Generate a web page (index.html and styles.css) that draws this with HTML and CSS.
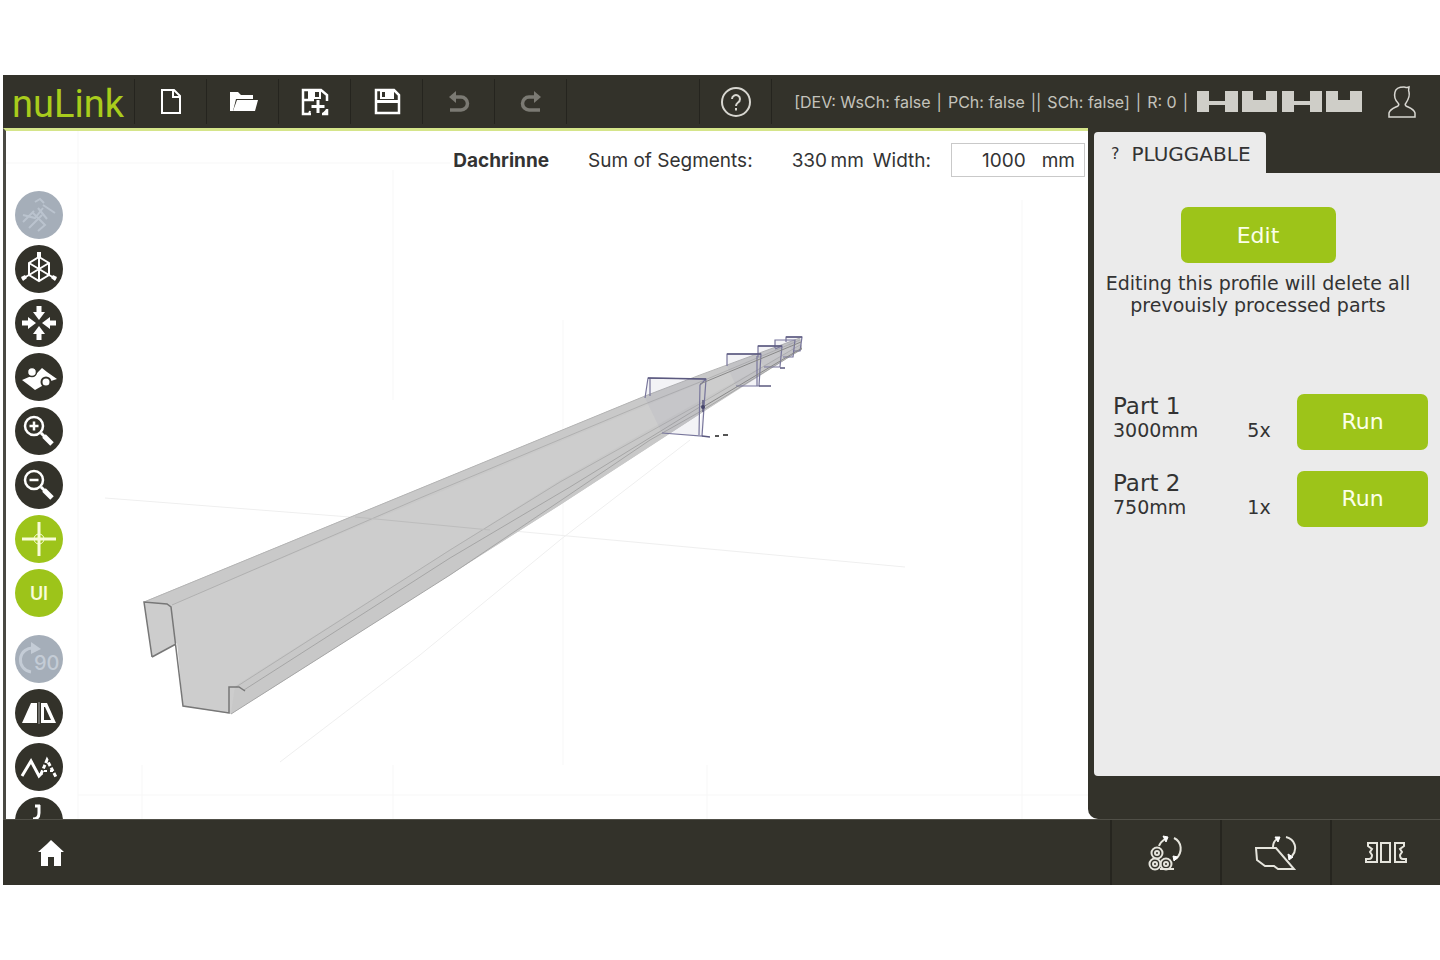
FILE: index.html
```html
<!DOCTYPE html>
<html lang="en">
<head>
<meta charset="utf-8">
<title>nuLink</title>
<link rel="stylesheet" href="styles.css">
</head>
<body>
<div class="app">
  <header class="topbar">
    <a class="logo" href="#">nuLink</a>
    <button class="bar-btn" aria-label="New"><svg width="24" height="28" viewBox="0 0 24 28"><path d="M3 2h12l6 6v17H3z" fill="none" stroke="#fff" stroke-width="2"/><path d="M14 2v7h7" fill="none" stroke="#fff" stroke-width="2"/></svg></button>
    <button class="bar-btn" aria-label="Open"><svg width="30" height="28" viewBox="0 0 30 28"><path d="M2 23V4h8l3 3h12v4H8L5 23z" fill="#fff"/><path d="M9 12h21l-3 11H5z" fill="#fff"/></svg></button>
    <button class="bar-btn" aria-label="Save as"><svg width="30" height="28" viewBox="0 0 30 28"><path d="M11 26H3V2h18l6 5v6M3 12h11M27 21v5h-5" fill="none" stroke="#fff" stroke-width="2.500"/><path d="M8 2h13v9H8z" fill="#fff"/><path d="M15 4h4v5h-4z" fill="#33322a"/><path d="M18 12v13M11.500 18.500h13" stroke="#33322a" stroke-width="6"/><path d="M18 12v13M11.500 18.500h13" stroke="#fff" stroke-width="3"/><path d="M10 23l-1 3M23 26l4-4" stroke="#fff" stroke-width="2"/></svg></button>
    <button class="bar-btn" aria-label="Save"><svg width="28" height="28" viewBox="0 0 28 28"><path d="M3 2h18l5 5v18H3z" fill="none" stroke="#fff" stroke-width="2.500"/><path d="M7 2h14v9H7zM3 12h23v3H3z" fill="#fff"/><path d="M9 4h3v5H9z" fill="#33322a"/></svg></button>
    <button class="bar-btn" aria-label="Undo" disabled><svg width="24" height="24" viewBox="0 0 24 24"><path d="M5 7h9a6 6 0 0 1 0 13H3" fill="none" stroke="#7b7a73" stroke-width="3.500"/><path d="M2 7l7-6v12z" fill="#7b7a73"/></svg></button>
    <button class="bar-btn" aria-label="Redo" disabled><svg width="24" height="24" viewBox="0 0 24 24"><path d="M19 7h-9a6 6 0 0 0 0 13h11" fill="none" stroke="#7b7a73" stroke-width="3.500"/><path d="M22 7l-7-6v12z" fill="#7b7a73"/></svg></button>
    <span class="spacer"></span>
    <button class="bar-btn help" aria-label="Help"><svg width="32" height="32" viewBox="0 0 32 32"><circle cx="16" cy="16" r="14" fill="none" stroke="#d8d7d1" stroke-width="2"/><path d="M12 13a4 4 0 1 1 6 3.500c-1.500 1-2 1.500-2 3.500M16 22v2.500" fill="none" stroke="#d8d7d1" stroke-width="2"/></svg></button>
    <div class="status">
      <div class="status-text"><span>[DEV: WsCh: false</span><span>|</span><span>PCh: false</span><span>||</span><span>SCh: false]</span><span>|</span><span>R: 0</span><span>|</span></div>
      <svg class="profiles" width="166" height="21" viewBox="0 0 166 21" fill="#cfcec8"><path d="M0 0h12v21H0zM28 0h13v21H28zM12 10h16v4H12z"/><path d="M45 0h11v21H45zM69 0h11v21H69zM56 9h13v12H56z"/><path d="M85 0h12v21H85zM113 0h12v21h-12zM97 10h16v4H97z"/><path d="M129 0h12v21h-12zM153 0h12v21h-12zM141 9h12v12h-12z"/></svg>
      <button class="user" aria-label="Account"><svg width="30" height="34" viewBox="0 0 30 34"><path d="M2 32v-4c1-4 5-5 9-7 1-1 1-2 0-3-3-3-4-7-3-11 1-5 6-5 9-5 1 0 3 1 5 0 0 2-1 3 0 5 1 4-1 8-3 11-1 1-1 2 0 3 4 2 8 3 9 7v4z" fill="none" stroke="#d8d7d1" stroke-width="1.500"/></svg></button>
    </div>
  </header>

  <main class="workspace">
    <section class="viewport">
      <svg class="scene" viewBox="6 131 1082 688" preserveAspectRatio="xMinYMin slice" aria-hidden="true">
        <g fill="none" stroke="#f7f7f7"><path d="M78 131V819M6 163H450M78 795H1088M142 765V819M393 765V819M707 765V819M563 320V765M393 170V400M1022 200V819"/></g>
        <g fill="none" stroke="#efefef"><path d="M105 498L350 517M470 527L905 567M280 762L420 655 560 540 690 440"/></g>
        <path d="M144 602L148 600 645 396 800 338 802 347 703 412 560 505 231 714 183 706 177 643 152 657z" fill="#cdcdcd"/>
        <path d="M144 602L645 396 800 338 801 341 700 383 171 605z" fill="#c9c9c9"/>
        <path d="M235 686L560 480 703 399 802 345 802 349 703 412 560 505 231 714z" fill="#c8c8c8"/>
        <path d="M144 602L645 396 700 375 800 338" fill="none" stroke="#b4b4b4"/>
        <path d="M172 605L420 498 645 404 700 382 800 340M236 687L450 550 560 482 703 402 800 345" fill="none" stroke="#b0b0b0"/>
        <path d="M244 690L450 558 570 487 703 405M231 714L450 575 563 499 650 440 703 410 802 349" fill="none" stroke="#a6a6a6"/>
        <path d="M355 517L490 530" stroke="#bdbdbd"/>
        <path d="M152 657L144 602 167 604 171 607 183 706 229 713 229 687 239 687 245 691M152 657L176 644" fill="none" stroke="#777" stroke-width="1.500"/>
        <g fill="#8885aa" fill-opacity=".1" stroke="#77759b" stroke-width="1.200">
          <path d="M645 398L648 378 706 379 702 436 662 433M650 378V396M706 379L700 385 699 435"/>
          <path d="M727 366V354H761L759 386H736M757 356V386"/>
          <path d="M758 357V346H782L780 367H764M775 349l7-3"/>
          <path d="M775 348V340H795L793 357H783"/>
          <path d="M786 342V337H802L800 351H793"/>
        </g>
        <path d="M648 378L706 379M703 400v12M727 354h34M758 346h24M786 337h16M702 436l8 1M759 386h12M780 368h5" stroke="#5b597f" stroke-width="1.500"/>
        <path d="M700 384L801 342M703 407L802 348" stroke="#888" stroke-width="1"/>
        <circle cx="703" cy="407" r="2" fill="#45446a"/>
        <path d="M715 436h4M723 435h5" stroke="#555" stroke-width="2"/>
      </svg>

      <nav class="tools" aria-label="View tools">
        <button class="tool muted" aria-label="Measure" disabled><svg viewBox="0 0 48 48"><path d="M8 31l11-11M14 37l13-13M28 14l12 8M17 21l13 13-7 6M23 17l9 11M20 11l5-3 4 4M8 24l12 3 8-10" fill="none" stroke="#bac3ce" stroke-width="2"/></svg></button>
        <button class="tool" aria-label="Axes"><svg viewBox="0 0 48 48"><g fill="none" stroke="#fff" stroke-width="2"><path d="M24 12l10 6v12l-10 6-10-6V18z"/><path d="M24 7v29M14 18l20 12M34 18L14 30M14 30l-7 4M34 30l7 4"/></g><path d="M22 7h4v6h-4zM6 32l4-2 2 3-4 3zM42 32l-4-2-2 3 4 3z" fill="#fff"/></svg></button>
        <button class="tool" aria-label="Fit view"><svg viewBox="0 0 48 48" fill="#fff"><path id="arr" d="M21.500 7h5v6h3.500l-6 8-6-8h3.500z"/><use href="#arr" transform="rotate(90 24 24)"/><use href="#arr" transform="rotate(180 24 24)"/><use href="#arr" transform="rotate(270 24 24)"/></svg></button>
        <button class="tool" aria-label="Plane"><svg viewBox="0 0 48 48"><path d="M7 27l14-6 6-6 5 4 10 7-9 3-6 4-7 4-5-4z" fill="#fff"/><circle cx="17" cy="19" r="4.500" fill="#fff" stroke="#33322a" stroke-width="1.500"/><circle cx="31" cy="29" r="4.500" fill="#fff" stroke="#33322a" stroke-width="2"/></svg></button>
        <button class="tool" aria-label="Zoom in"><svg viewBox="0 0 48 48" fill="none" stroke="#fff"><circle cx="19" cy="19" r="9" stroke-width="2.500"/><path d="M14.500 19h9M19 14.500v9" stroke-width="2.500"/><path d="M26 26l4 4" stroke-width="3"/><path d="M29 29l8 8" stroke-width="5"/></svg></button>
        <button class="tool" aria-label="Zoom out"><svg viewBox="0 0 48 48" fill="none" stroke="#fff"><circle cx="19" cy="19" r="9" stroke-width="2.500"/><path d="M14.500 19h9" stroke-width="2.500"/><path d="M26 26l4 4" stroke-width="3"/><path d="M29 29l8 8" stroke-width="5"/></svg></button>
        <button class="tool active" aria-label="Crosshair"><svg viewBox="0 0 48 48" fill="none" stroke="#f8fcd8"><path d="M24 7v34M7 24h34" stroke-width="3"/><circle cx="24" cy="24" r="5" stroke-width="1"/></svg></button>
        <button class="tool active">UI</button>
        <button class="tool muted after-gap" aria-label="Rotate 90 degrees" disabled><svg viewBox="0 0 48 48"><path d="M19 13A12 12 0 1 0 16 37" fill="none" stroke="#c4ccd6" stroke-width="3"/><path d="M16 7l10 7-10 5z" fill="#c4ccd6"/><text class="deg" x="19" y="35">90</text></svg></button>
        <button class="tool" aria-label="Mirror"><svg viewBox="0 0 48 48"><path d="M7 34l9-20h6v20zM26 14h6l9 20H26z" fill="#fff"/><path d="M29 18h1l6 13h-7z" fill="#33322a"/><path d="M24 13v22" stroke="#aaa" stroke-width="1"/></svg></button>
        <button class="tool" aria-label="Bends"><svg viewBox="0 0 48 48" fill="none" stroke="#fff" stroke-width="3"><path d="M7 33l9-15 8 15 3-3"/><path d="M26 31l6-14 9 17" stroke-dasharray="4 2"/><path d="M29 28h9" stroke-width="2" stroke-dasharray="3 3"/></svg></button>
        <button class="tool" aria-label="Hook"><svg viewBox="0 0 48 48" fill="none" stroke="#fff" stroke-width="3"><path d="M24 8v8c0 4-2 6-6 6M20 9h5"/></svg></button>
      </nav>

      <form class="profile-info">
        <strong class="profile-name">Dachrinne</strong>
        <span class="sum-label">Sum of Segments:</span>
        <span class="sum-value">330&#8201;mm</span>
        <label class="width-label" for="width">Width:</label>
        <span class="field"><input id="width" type="text" value="1000"><span>mm</span></span>
      </form>
    </section>

    <aside class="panel">
      <button class="tab"><span class="tab-mark">?</span>PLUGGABLE</button>
      <div class="panel-body">
        <div class="intro">
          <button class="btn edit">Edit</button>
          <p class="note">Editing this profile will delete all prevouisly processed parts</p>
        </div>
        <ul class="parts">
          <li class="part"><div><div class="part-name">Part 1</div><div>3000mm</div></div><span class="count">5x</span><button class="btn">Run</button></li>
          <li class="part"><div><div class="part-name">Part 2</div><div>750mm</div></div><span class="count">1x</span><button class="btn">Run</button></li>
        </ul>
      </div>
    </aside>
  </main>

  <footer class="bottombar">
    <a class="home" href="#" aria-label="Home"><svg width="28" height="28" viewBox="0 0 28 28"><path d="M14 1l13 12h-3v14h-7v-9h-6v9H4V13H1L10 5z" fill="#fff"/></svg></a>
    <button class="foot-btn" aria-label="Coils"><svg width="36" height="36" viewBox="0 0 36 36" fill="none" stroke="#e6e5dd" stroke-width="2"><circle cx="9" cy="18" r="5.500"/><circle cx="9" cy="18" r="2"/><circle cx="7" cy="29" r="5.500"/><circle cx="7" cy="29" r="2"/><circle cx="18" cy="29" r="5.500"/><circle cx="18" cy="29" r="2"/><path d="M12 34h14M11 11c1-3 3-5 6-7M26 3c8 4 9 14 2 21" stroke-width="2"/><path d="M15 1l5 1-2 5zM25 21l5 1-4 4z" fill="#fff" stroke="#fff" stroke-width="1"/></svg></button>
    <button class="foot-btn" aria-label="Rotate profile"><svg width="42" height="36" viewBox="0 0 42 36" fill="none" stroke="#e6e5dd" stroke-width="2"><path d="M1 13h20l18 21H23l-4-3h-9L2 25z"/><path d="M18 12c0-4 1-6 4-8M31 2c9 2 12 12 6 19"/><path d="M20 2l5 0-2 5zM33 19l5 3-4 3z" fill="#fff" stroke="#fff" stroke-width="1"/></svg></button>
    <button class="foot-btn" aria-label="Tools"><svg width="42" height="24" viewBox="0 0 42 24" fill="none" stroke="#e6e5dd" stroke-width="2"><path d="M3 2h9v19H1v-3h3c2 0 3-2 3-4l-2-3 2-3-4-3zM16 2h9v19h-9zM39 2h-9v19h11v-3h-3c-2 0-3-2-3-4l2-3-2-3 4-3z"/></svg></button>
  </footer>
</div>
</body>
</html>
```
FILE: styles.css
```css
* { box-sizing: border-box; }

body {
  margin: 0;
  height: 100vh;
  padding: 75px 0 75px 3px;
  background: #fff;
  color: #333;
  font-family: Inter, "Noto Sans", sans-serif;
}

button {
  margin: 0;
  padding: 0;
  border: 0;
  background: none;
  color: inherit;
  font: inherit;
}

svg { display: block; }

.app {
  height: 100%;
  display: flex;
  flex-direction: column;
  background: #33322a;
}

.topbar {
  flex: none;
  height: 53px;
  display: flex;
  align-items: stretch;
}

.logo {
  width: 131px;
  padding: 5px 0 0 9px;
  display: flex;
  align-items: center;
  color: #a9cc1c;
  font: 400 38px/48px Roboto, sans-serif;
  text-decoration: none;
}

.bar-btn {
  width: 72px;
  margin: 4px 0;
  display: flex;
  align-items: center;
  justify-content: center;
  border-left: 1px solid #25241e;
}

.spacer {
  flex: 1;
  margin: 4px 0;
  border-left: 1px solid #25241e;
}

.status {
  margin: 4px 0;
  padding: 0 23px 0 22px;
  display: flex;
  align-items: center;
  border-left: 1px solid #25241e;
  color: #c4c3bc;
}

.status-text {
  display: flex;
  gap: 6px;
  font-size: 16px;
  white-space: nowrap;
}

.profiles { margin: 0 24px 0 9px; }

.workspace {
  flex: 1;
  min-height: 0;
  display: flex;
  background: #fff;
}

.viewport {
  position: relative;
  flex: 1;
  min-width: 0;
  overflow: hidden;
  display: flex;
  justify-content: space-between;
  align-items: flex-start;
  border-top: 3px solid #d5e58a;
  border-left: 3px solid #4a4943;
}

.scene {
  position: absolute;
  inset: 0;
  width: 100%;
  height: 100%;
}

.tools {
  position: relative;
  padding: 60px 0 0 9px;
  display: flex;
  flex-direction: column;
  gap: 6px;
}

.tool {
  flex: none;
  width: 48px;
  height: 48px;
  display: flex;
  align-items: center;
  justify-content: center;
  border-radius: 50%;
  background: #33322a;
  color: #f8fcd8;
  font-size: 18px;
  font-weight: 600;
}

.tool svg { width: 48px; height: 48px; }
.tool.muted { background: #a5aeb9; }
.tool.active { background: #9dc41a; }
.tool.after-gap { margin-top: 12px; }

.deg {
  fill: #c4ccd6;
  font-size: 20px;
  font-weight: 500;
}

.profile-info {
  position: relative;
  padding: 12px 3px 0 0;
  display: flex;
  align-items: center;
  font-size: 19px;
  white-space: nowrap;
}

.sum-label { margin-left: 39px; }
.sum-value { margin-left: 39px; }
.width-label { margin-left: 9px; }

.field {
  width: 134px;
  height: 34px;
  margin-left: 20px;
  padding: 0 9px;
  display: flex;
  align-items: center;
  justify-content: flex-end;
  gap: 16px;
  border: 1px solid #c9c9c9;
  background: #fff;
}

.field input {
  flex: 1;
  min-width: 0;
  padding: 0;
  border: 0;
  background: none;
  color: inherit;
  font: inherit;
  text-align: right;
}

.panel {
  flex: none;
  width: 352px;
  padding: 4px 0 43px 6px;
  display: flex;
  flex-direction: column;
  align-items: flex-start;
  border-radius: 0 0 0 10px;
  background: #33322a;
  font-family: "DejaVu Sans", sans-serif;
}

.tab {
  flex: none;
  height: 41px;
  padding: 2px 15px 0 17px;
  display: flex;
  align-items: center;
  gap: 12px;
  border-radius: 4px 4px 0 0;
  background: #ebebeb;
  font-size: 20px;
}

.tab-mark { font-size: 16px; }

.panel-body {
  flex: 1;
  width: 100%;
  padding: 34px 12px 0 10px;
  border-radius: 0 0 0 4px;
  background: #ebebeb;
}

.btn {
  width: 131px;
  height: 56px;
  border-radius: 7px;
  background: #9dc419;
  color: #fbffe9;
  font-size: 22px;
}

.intro {
  width: 308px;
  text-align: center;
}

.edit { width: 155px; }

.note {
  margin: 9px 0 0;
  font-size: 19px;
  line-height: 22px;
}

.parts {
  margin: 78px 0 0;
  padding: 0 0 0 9px;
  display: flex;
  flex-direction: column;
  gap: 21px;
  list-style: none;
}

.part {
  display: grid;
  grid-template-columns: 1fr 40px 131px;
  column-gap: 18px;
  font-size: 19px;
  line-height: 24px;
}

.part-name { font-size: 23px; }

.count {
  padding-top: 24px;
  text-align: center;
}

.bottombar {
  flex: none;
  height: 66px;
  display: flex;
  align-items: stretch;
  border-top: 1px solid #504f47;
}

.home {
  margin-right: auto;
  padding-left: 34px;
  display: flex;
  align-items: center;
}

.foot-btn {
  width: 110px;
  display: flex;
  align-items: center;
  justify-content: center;
  border-left: 2px solid #26251f;
}
```
